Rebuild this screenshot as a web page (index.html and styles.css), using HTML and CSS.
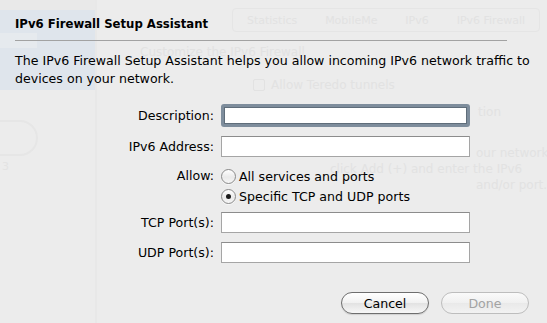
FILE: index.html
```
<!DOCTYPE html>
<html lang="en">
<head>
  <meta charset="UTF-8" />
  <meta name="viewport" content="width=device-width, initial-scale=1.0" />
  <title>IPv6 Firewall Setup Assistant</title>
  <link rel="stylesheet" href="styles.css">
</head>
<body>
  <div class="window">
    <!-- the preferences window behind the sheet -->
    <div class="backdrop">
      <div class="side">
        <div class="side-top"></div>
        <div class="side-list"><div class="side-sel"></div></div>
        <div class="side-pill"></div>
        <div class="side-num">3</div>
      </div>
      <div class="main">
        <div class="tabs">
          <span>Statistics</span><span>MobileMe</span><span>IPv6</span><span>IPv6 Firewall</span>
        </div>
        <div class="ghost-head">Customize the IPv6 Firewall</div>
        <div class="ghost-check"><span class="ghost-box"></span>Allow Teredo tunnels</div>
        <div class="ghost-tail">tion</div>
        <div class="ghost-text">
          <span class="ghost-end">our network</span><br>
          click Add (+) and enter the IPv6<br>
          <span class="ghost-end">and/or port.</span>
        </div>
      </div>
    </div>

    <div class="sheet">
      <h1 class="sheet-title">IPv6 Firewall Setup Assistant</h1>
      <hr class="sheet-rule">
      <p class="sheet-intro">The IPv6 Firewall Setup Assistant helps you allow incoming IPv6 network traffic to<br>devices on your network.</p>

      <form class="fields" onsubmit="return false">
        <div class="row row-desc">
          <label class="field-label" for="desc">Description:</label>
          <input id="desc" class="text-field focused" type="text">
        </div>
        <div class="row">
          <label class="field-label" for="addr">IPv6 Address:</label>
          <input id="addr" class="text-field" type="text">
        </div>
        <div class="row row-allow">
          <span class="field-label">Allow:</span>
          <div class="radios">
            <label class="radio-row"><span class="radio"></span>All services and ports</label>
            <label class="radio-row"><span class="radio on"></span>Specific TCP and UDP ports</label>
          </div>
        </div>
        <div class="row row-tcp">
          <label class="field-label" for="tcp">TCP Port(s):</label>
          <input id="tcp" class="text-field" type="text">
        </div>
        <div class="row">
          <label class="field-label" for="udp">UDP Port(s):</label>
          <input id="udp" class="text-field" type="text">
        </div>
      </form>

      <div class="actions">
        <button class="btn">Cancel</button>
        <button class="btn disabled">Done</button>
      </div>
    </div>
  </div>
</body>
</html>
```

FILE: styles.css
```
* {
  box-sizing: border-box;
  margin: 0;
  padding: 0;
  font-family: 'Lucida Grande', 'DejaVu Sans', sans-serif;
}
body {
  background: #ececec;
  color: #000;
  font-size: 12.6px;
}
.window {
  position: relative;
  width: 547px;
  height: 323px;
  overflow: hidden;
}

/* ghost window */
.backdrop {
  display: flex;
  height: 100%;
  color: #e2e2e2;
  font-size: 12px;
}
.side {
  flex: 0 0 97px;
  border-right: 2px solid #e8e8e8;
}
.side-top {
  height: 10px;
  background: #e9e9e9;
}
.side-list {
  height: 80px;
  background: #dfe5ec;
  padding-top: 23px;
}
.side-sel {
  width: 37px;
  height: 15px;
  background: #e6eaee;
}
.side-pill {
  width: 42px;
  height: 36px;
  margin: 30px 0 0 -4px;
  border: 2px solid #e6e6e6;
  border-radius: 0 18px 18px 0;
}
.side-num {
  margin: 4px 0 0 2px;
  font-size: 11px;
  color: #e3e3e3;
}
.main {
  flex: 1;
  min-width: 0;
  overflow: hidden;
  padding: 8px 7px 0 43px;
}
.tabs {
  display: flex;
  justify-content: space-around;
  margin-left: 92px;
  height: 24px;
  border: 1px solid #e5e5e5;
  border-radius: 4px;
  align-items: center;
  font-size: 11px;
}
.ghost-head {
  margin-top: 13px;
}
.ghost-check {
  display: flex;
  align-items: center;
  gap: 6px;
  margin: 19px 0 0 113px;
}
.ghost-box {
  width: 12px;
  height: 12px;
  border: 1px solid #e2e2e2;
  border-radius: 2px;
}
.ghost-tail {
  margin: 13px 0 0 338px;
}
.ghost-text {
  margin-top: 26px;
  padding-left: 190px;
  line-height: 16px;
  white-space: nowrap;
}
.ghost-end {
  margin-left: 146px;
}

/* sheet */
.sheet {
  position: absolute;
  inset: 0;
  display: flex;
  flex-direction: column;
  padding: 16px 18px 0 15px;
}
.sheet-title {
  font-size: 11.7px;
  font-weight: bold;
  line-height: 16px;
}
.sheet-rule {
  width: 492px;
  margin-top: 8px;
  border: none;
  border-top: 1px solid #a2a2a2;
}
.sheet-intro {
  margin-top: 11px;
  line-height: 18px;
  white-space: nowrap;
}
.fields {
  display: flex;
  flex-direction: column;
  margin-top: 16px;
}
.row {
  display: flex;
  align-items: center;
  gap: 7px;
  margin-top: 9px;
}
.row-desc {
  margin-top: 0;
}
.row-allow {
  align-items: flex-start;
}
.row-tcp {
  margin-top: 6px;
}
.field-label {
  width: 199px;
  text-align: right;
  line-height: 20px;
}
.text-field {
  width: 249px;
  height: 21px;
  border: 1px solid #a5a5a5;
  border-top-color: #8c8c8c;
  background: #fff;
  font-size: 12px;
  padding: 0 4px;
  outline: none;
}
.text-field.focused {
  height: 23px;
  border: 3px solid #7e8d9c;
  border-radius: 3px;
  box-shadow: inset 0 0 0 1px #5f6d7a;
}
.radios {
  display: flex;
  flex-direction: column;
}
.radio-row {
  display: flex;
  align-items: center;
  height: 20px;
}
.radio {
  position: relative;
  width: 15px;
  height: 15px;
  margin-right: 3px;
  border: 1px solid #8a8a8a;
  border-radius: 50%;
  background: linear-gradient(#ffffff, #eaeaea 55%, #f6f6f6);
  box-shadow: 0 1px 0 rgba(255,255,255,0.6);
}
.radio.on::after {
  content: "";
  position: absolute;
  left: 4px;
  top: 4px;
  width: 5px;
  height: 5px;
  border-radius: 50%;
  background: #1a1a1a;
}
.actions {
  display: flex;
  justify-content: flex-end;
  gap: 12px;
  margin-top: 29px;
}
.btn {
  width: 88px;
  height: 22px;
  border: 1px solid #6e6e6e;
  border-radius: 11px;
  background: linear-gradient(#ffffff, #f1f1f1 50%, #e2e2e2 51%, #f7f7f7);
  font-size: 12.6px;
  color: #000;
  box-shadow: 0 1px 1px rgba(0,0,0,0.12);
}
.btn.disabled {
  border-color: #bdbdbd;
  color: #a3a3a3;
  background: linear-gradient(#fafafa, #f0f0f0 50%, #e9e9e9 51%, #f2f2f2);
  box-shadow: none;
}
```
